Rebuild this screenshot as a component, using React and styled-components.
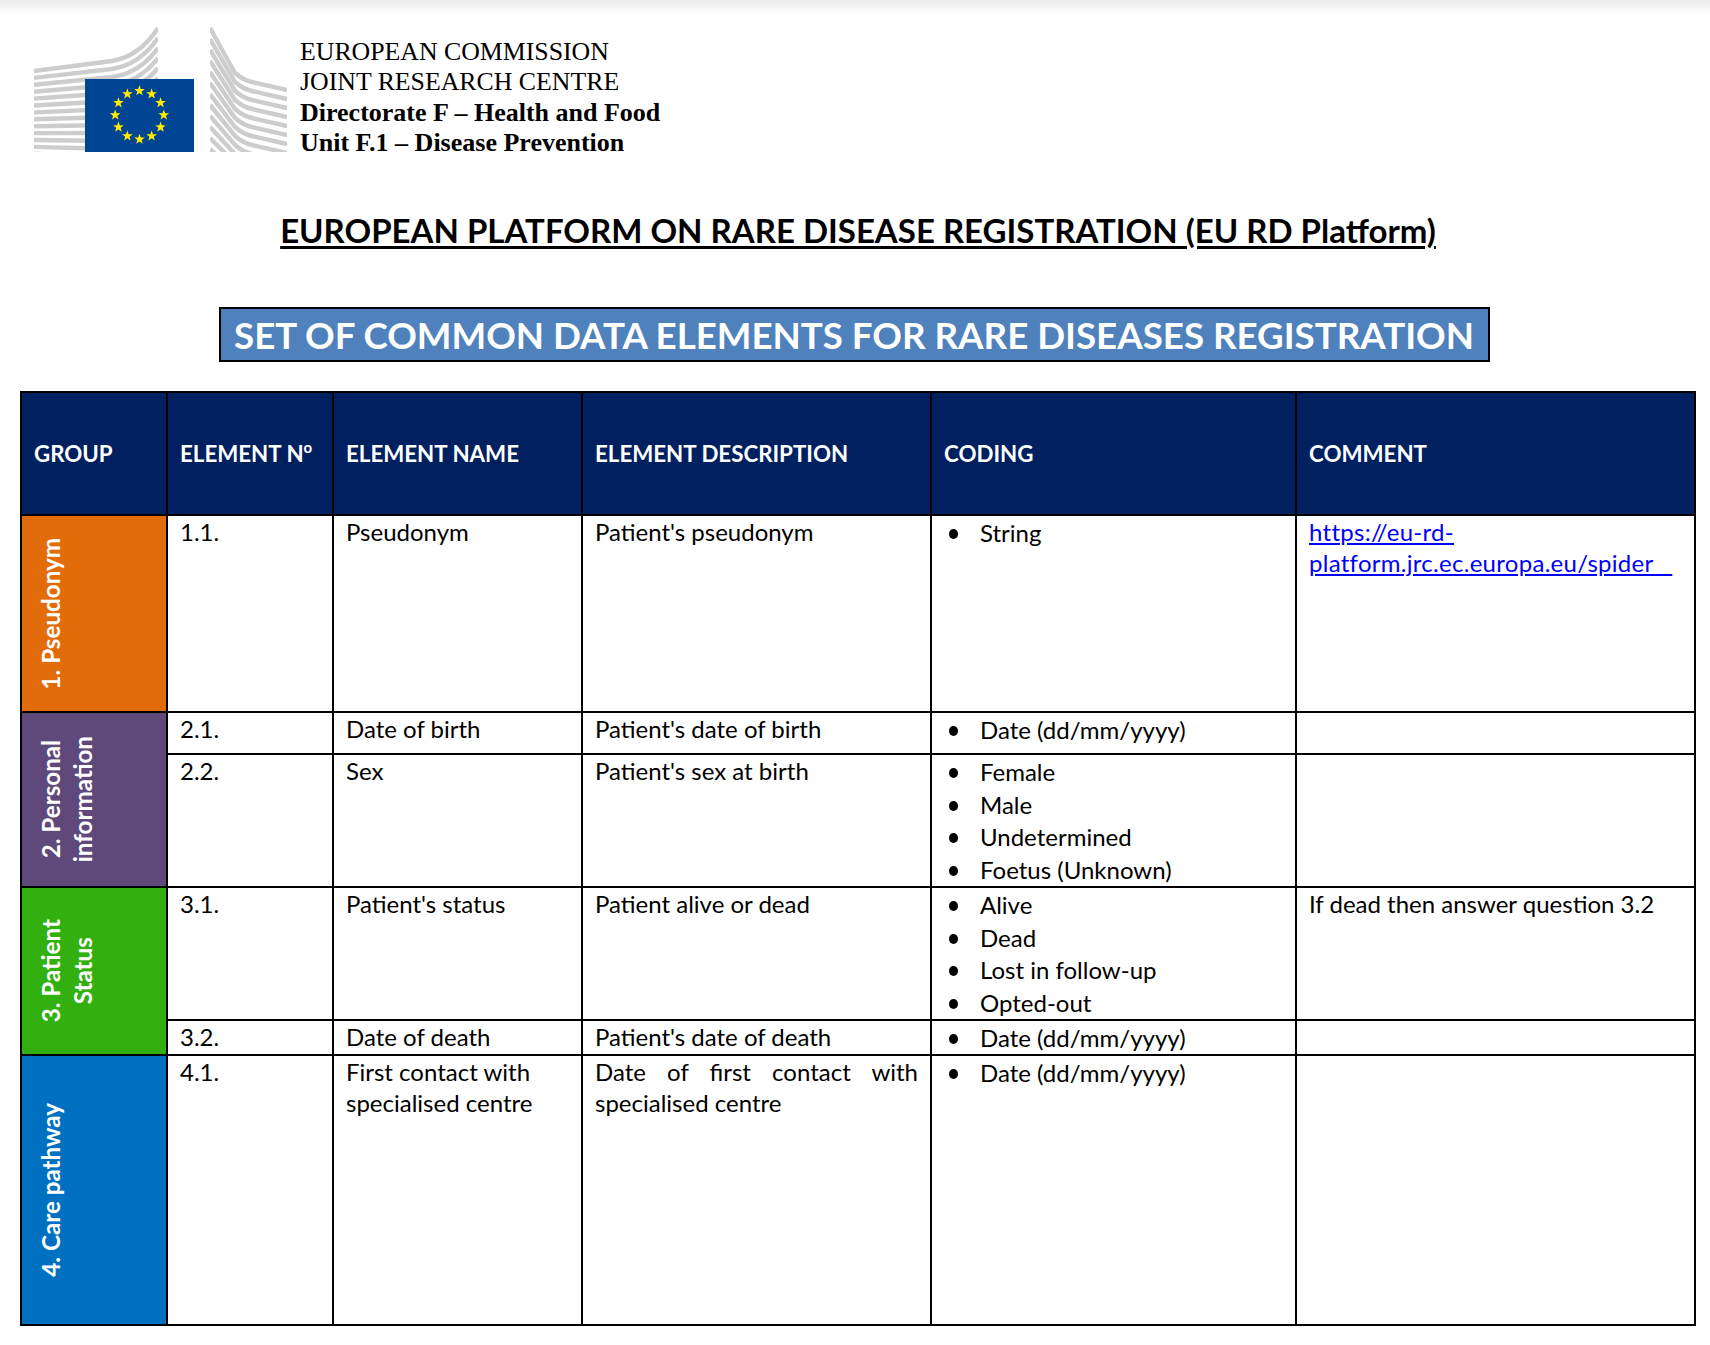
import React from 'react'
import styled, { createGlobalStyle } from 'styled-components'

const GlobalStyle = createGlobalStyle`
  html, body { margin: 0; padding: 0; background: #fff; }
  body { font-family: "Lato", "Open Sans", sans-serif; color: #000; }
`

const Page = styled.div`
  width: 1710px;
  height: 1345px;
  overflow: hidden;
  box-sizing: border-box;
  background: linear-gradient(#ececec 0, #fff 14px) no-repeat;
  padding: 27px 14px 0 20px;
`

const Letterhead = styled.header`
  display: flex;
  align-items: flex-start;
  padding-left: 14px;
  height: 125px;
`

const Logo = styled.svg`
  flex: none;
  width: 253px;
  height: 125px;
`

const Office = styled.div`
  margin: 10px 0 0 13px;
  font-family: "Liberation Serif", serif;
  font-size: 25.8px;
  line-height: 30.4px;
`

const OfficeLine = styled.div`
  font-weight: ${({ $bold }) => ($bold ? 700 : 400)};
  font-size: ${({ $bold }) => ($bold ? '26px' : 'inherit')};
`

const PlatformTitle = styled.h1`
  margin: 58px 0 0;
  text-align: center;
  font-size: 33px;
  line-height: 40px;
  font-weight: 700;
  text-decoration: underline;
  text-decoration-thickness: 3px;
  text-underline-offset: 3px;
`

const BannerRow = styled.div`
  display: flex;
  justify-content: center;
  margin: 57px 8px 0 0;
`

const Banner = styled.h2`
  margin: 0;
  box-sizing: border-box;
  width: 1271px;
  height: 55px;
  border: 2px solid #000;
  background: #4f81bd;
  color: #fff;
  font-size: 36.7px;
  line-height: 52px;
  font-weight: 700;
  text-align: center;
  white-space: nowrap;
`

const Table = styled.table`
  margin-top: 29px;
  width: 1674px;
  table-layout: fixed;
  border-collapse: collapse;
  font-size: 24px;
`

const HeadRow = styled.tr`
  height: 123px;
  background: #002060;
`

const HeadCell = styled.th`
  border: 2px solid #000;
  padding: 0 12px;
  color: #fff;
  font-size: 22.3px;
  font-weight: 700;
  text-align: left;
  white-space: nowrap;
`

const Degree = styled.sup`
  font-size: 15px;
  line-height: 0;
  vertical-align: 9px;
`

const BodyRow = styled.tr`
  height: ${({ $h }) => $h}px;
`

const GroupCell = styled.td`
  border: 2px solid #000;
  padding: 0 0 0 13px;
  vertical-align: middle;
  background: ${({ $bg }) => $bg};
`

const GroupLabel = styled.div`
  writing-mode: vertical-rl;
  transform: rotate(180deg);
  width: fit-content;
  color: #fff;
  font-weight: 700;
  font-size: 24.2px;
  line-height: 32px;
  text-align: center;
  white-space: nowrap;
`

const Cell = styled.td`
  border: 2px solid #000;
  padding: 0 12px;
  vertical-align: top;
  line-height: 31px;
  text-align: ${({ $justify }) => ($justify ? 'justify' : 'left')};
`

const Bullets = styled.ul`
  margin: 1px 0 -1px;
  padding: 0 0 0 36px;
  line-height: 32.7px;
  list-style: none;
`

const BulletItem = styled.li`
  position: relative;
  &::before {
    content: "";
    position: absolute;
    left: -31px;
    top: 12px;
    width: 9px;
    height: 10px;
    border-radius: 50%;
    background: #000;
  }
`

const SpiderLink = styled.a`
  color: #0000ff;
  text-decoration: underline;
  letter-spacing: 0.28px;
`

const columns = [146, 166, 249, 349, 365, 399]
const headers = ['GROUP', 'ELEMENT N', 'ELEMENT NAME', 'ELEMENT DESCRIPTION', 'CODING', 'COMMENT']

const rows = [
  {
    h: 197, group: ['1. Pseudonym'], bg: '#e36c0a', span: 1,
    no: '1.1.', name: 'Pseudonym', desc: "Patient's pseudonym", coding: ['String'], link: true,
  },
  {
    h: 42, group: ['2. Personal', 'information'], bg: '#5f497a', span: 2,
    no: '2.1.', name: 'Date of birth', desc: "Patient's date of birth", coding: ['Date (dd/mm/yyyy)'],
  },
  { h: 133, no: '2.2.', name: 'Sex', desc: "Patient's sex at birth", coding: ['Female', 'Male', 'Undetermined', 'Foetus (Unknown)'] },
  {
    h: 133, group: ['3. Patient', 'Status'], bg: '#31b010', span: 2,
    no: '3.1.', name: "Patient's status", desc: 'Patient alive or dead',
    coding: ['Alive', 'Dead', 'Lost in follow-up', 'Opted-out'], comment: 'If dead then answer question 3.2',
  },
  { h: 34, no: '3.2.', name: 'Date of death', desc: "Patient's date of death", coding: ['Date (dd/mm/yyyy)'] },
  {
    h: 270, group: ['4. Care pathway'], bg: '#0070c0', span: 1,
    no: '4.1.', name: 'First contact with specialised centre', desc: 'Date of first contact with specialised centre',
    coding: ['Date (dd/mm/yyyy)'],
  },
]

const starPoints = (cx, cy, r) => {
  const pts = []
  for (let i = 0; i < 10; i++) {
    const a = -Math.PI / 2 + (i * Math.PI) / 5
    const rad = i % 2 ? r * 0.4 : r
    pts.push(`${(cx + rad * Math.cos(a)).toFixed(2)},${(cy + rad * Math.sin(a)).toFixed(2)}`)
  }
  return pts.join(' ')
}

// drawn in page pixels minus the letterhead offset (34, 27)
const EcLogo = () => {
  const left = Array.from({ length: 13 }, (_, i) => i)
  const right = Array.from({ length: 12 }, (_, i) => i)
  const stars = Array.from({ length: 12 }, (_, i) => i)
  return (
    <Logo viewBox="0 0 253 125">
      <defs>
        <clipPath id="leftBlock"><rect x="0" y="0" width="124" height="125" /></clipPath>
        <clipPath id="rightBlock"><rect x="176" y="0" width="77" height="125" /></clipPath>
      </defs>
      <g clipPath="url(#leftBlock)" fill="none" stroke="#cdcdcd" strokeWidth="4.4">
        {left.map((i) => (
          <path key={i} d={`M0 ${44 + i * 6.9} L78 ${34 + i * 8} Q106 ${29 + i * 8.5} 124 ${1 + i * 10}`} />
        ))}
      </g>
      <g clipPath="url(#rightBlock)" fill="none" stroke="#cdcdcd" strokeWidth="4.4">
        {right.map((i) => (
          <path key={i} d={`M176 ${1 + i * 11} L201 ${46 + i * 9} Q209 ${53 + i * 9} 218 ${55 + i * 9} L253 ${63 + i * 9}`} />
        ))}
      </g>
      <rect x="51" y="52" width="109" height="73" fill="#004494" />
      {stars.map((i) => {
        const a = (i * Math.PI) / 6
        return (
          <polygon
            key={i}
            points={starPoints(105.5 + 24.3 * Math.sin(a), 88 - 24.3 * Math.cos(a), 5.6)}
            fill="#ffed00"
          />
        )
      })}
    </Logo>
  )
}

const App = () => (
  <Page>
    <GlobalStyle />
    <Letterhead>
      <EcLogo />
      <Office>
        <OfficeLine>EUROPEAN COMMISSION</OfficeLine>
        <OfficeLine>JOINT RESEARCH CENTRE</OfficeLine>
        <OfficeLine $bold>Directorate F – Health and Food</OfficeLine>
        <OfficeLine $bold>Unit F.1 – Disease Prevention</OfficeLine>
      </Office>
    </Letterhead>
    <PlatformTitle>EUROPEAN PLATFORM ON RARE DISEASE REGISTRATION (EU RD Platform)</PlatformTitle>
    <BannerRow>
      <Banner>SET OF COMMON DATA ELEMENTS FOR RARE DISEASES REGISTRATION</Banner>
    </BannerRow>
    <Table>
      <colgroup>
        {columns.map((w, i) => <col key={i} width={w} />)}
      </colgroup>
      <thead>
        <HeadRow>
          {headers.map((h) => (
            <HeadCell key={h}>
              {h}
              {h === 'ELEMENT N' && <Degree>o</Degree>}
            </HeadCell>
          ))}
        </HeadRow>
      </thead>
      <tbody>
        {rows.map((r) => (
          <BodyRow key={r.no} $h={r.h}>
            {r.group && (
              <GroupCell rowSpan={r.span} $bg={r.bg}>
                <GroupLabel>
                  {r.group.map((line) => <div key={line}>{line}</div>)}
                </GroupLabel>
              </GroupCell>
            )}
            <Cell>{r.no}</Cell>
            <Cell>{r.name}</Cell>
            <Cell $justify>{r.desc}</Cell>
            <Cell>
              <Bullets>
                {r.coding.map((c) => <BulletItem key={c}>{c}</BulletItem>)}
              </Bullets>
            </Cell>
            <Cell>
              {r.link && (
                <SpiderLink href="#spider">https://eu-rd-platform.jrc.ec.europa.eu/spider&nbsp;&nbsp;&nbsp;</SpiderLink>
              )}
              {r.comment}
            </Cell>
          </BodyRow>
        ))}
      </tbody>
    </Table>
  </Page>
)

export default App
